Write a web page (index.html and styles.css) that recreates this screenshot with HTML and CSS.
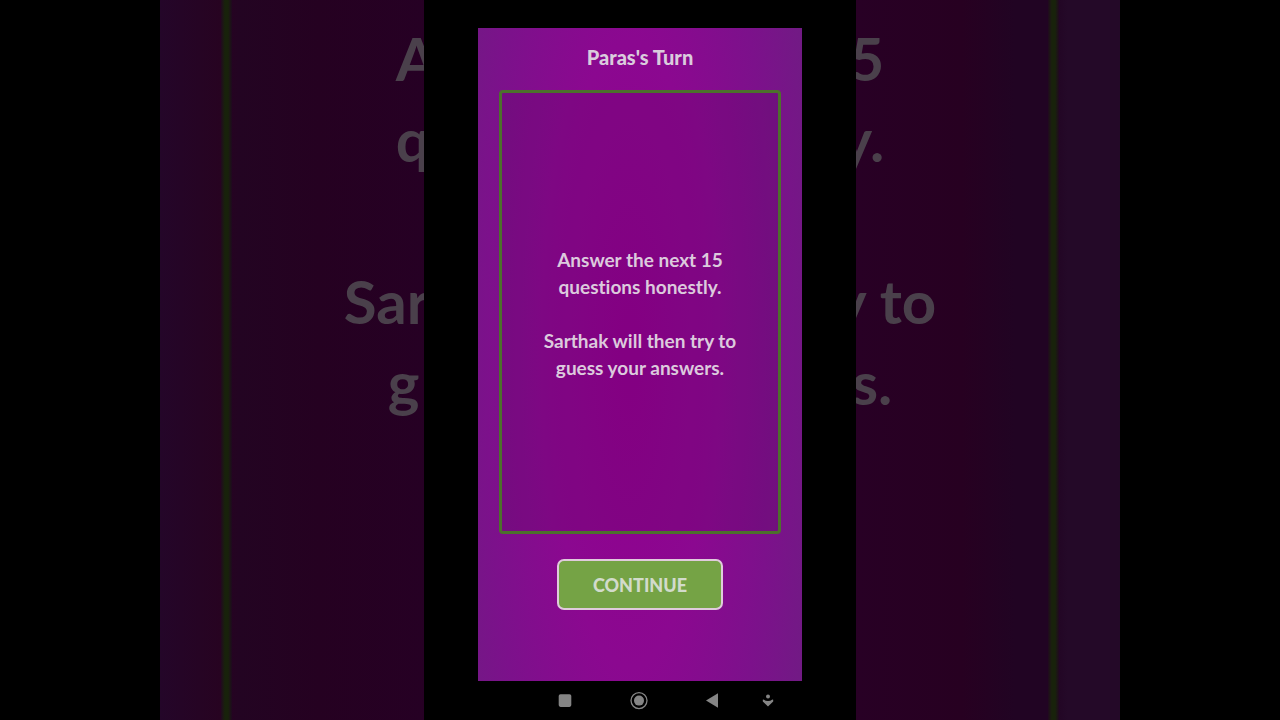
FILE: index.html
```html
<!DOCTYPE html>
<html lang="en">
<head>
<meta charset="utf-8">
<meta name="viewport" content="width=device-width, initial-scale=1">
<title>Paras's Turn</title>
<link rel="stylesheet" href="styles.css">
</head>
<body>
<div class="stage">
  <div class="side side-left" aria-hidden="true">
    <div class="edge"></div>
    <div class="echo">
      <span class="line inset-mid">A</span>
      <span class="line inset-mid">q</span>
      <span class="line"></span>
      <span class="line inset-wide">Sar</span>
      <span class="line inset-near">g</span>
    </div>
  </div>
  <div class="phone">
    <main class="screen">
      <h1 class="title">Paras's Turn</h1>
      <section class="card">
        <p>Answer the next 15<br>questions honestly.</p>
        <p>Sarthak will then try to<br>guess your answers.</p>
      </section>
      <button class="continue" type="button">CONTINUE</button>
    </main>
    <nav class="navbar" aria-label="System navigation">
      <button class="nav" type="button" aria-label="Recent apps">
        <svg width="20" height="20" viewBox="0 0 20 20"><rect x="3.700" y="3.300" width="12.600" height="12.600" rx="1.800" fill="#858585"/></svg>
      </button>
      <button class="nav" type="button" aria-label="Home">
        <svg width="20" height="20" viewBox="0 0 20 20"><circle cx="10" cy="9.600" r="8" fill="none" stroke="#858585" stroke-width="1.300"/><circle cx="10" cy="9.600" r="5" fill="#858585"/></svg>
      </button>
      <button class="nav" type="button" aria-label="Back">
        <svg width="20" height="20" viewBox="0 0 20 20"><path d="M4 9.500 16 2.200v14.600z" fill="#858585"/></svg>
      </button>
      <button class="nav" type="button" aria-label="Hide navigation bar">
        <svg width="20" height="20" viewBox="0 0 20 20"><circle cx="10" cy="5.600" r="2" fill="#858585"/><path d="M4.800 8.800Q5.200 8.200 6 8.800q1.300 1.200 4 1.200t4-1.200q.8-.6 1.200 0v1.600L10 15.400 4.800 10.400z" fill="#858585"/></svg>
      </button>
    </nav>
  </div>
  <div class="side side-right" aria-hidden="true">
    <div class="echo">
      <span class="line inset-mid">5</span>
      <span class="line inset-mid">y.</span>
      <span class="line"></span>
      <span class="line inset-wide">y to</span>
      <span class="line inset-near">s.</span>
    </div>
    <div class="edge"></div>
  </div>
</div>
</body>
</html>
```
FILE: styles.css
```css
* {
  box-sizing: border-box;
}

body {
  margin: 0;
  background: #000;
  font-family: Lato, "Open Sans", sans-serif;
  font-variant-ligatures: none;
}

.stage {
  display: grid;
  grid-template-columns: 11fr 18fr 11fr;
  width: 75%;
  min-height: 100vh;
  margin: 0 auto;
}

.side {
  display: flex;
  overflow: hidden;
  min-width: 0;
}

.side-left {
  background: linear-gradient(90deg, #240629 0, #270321 23%, #230422 30%, #250121 60%, #260024 100%);
}

.side-right {
  background: linear-gradient(90deg, #280025 0, #270021 40%, #210423 60%, #210423 75%, #240928 80%, #240928 100%);
}

.edge {
  flex: none;
  width: 11px;
  background: linear-gradient(90deg, #21091f, #18220b 35%, #18220b 65%, #200820);
}

.side-left .edge {
  margin-left: 23%;
}

.side-right .edge {
  margin-right: 23%;
}

.echo {
  flex: 1;
  min-width: 0;
  padding-top: 18px;
  color: #4a404b;
  font-size: 60px;
  font-weight: 700;
  line-height: 81px;
}

.line {
  display: block;
  height: 81px;
  white-space: nowrap;
}

.side-left .inset-mid { padding-left: 164px; }
.side-left .inset-wide { padding-left: 112px; }
.side-left .inset-near { padding-left: 156px; }

/* The right-hand lines run out from under the phone. */
.side-right .line {
  display: flex;
  justify-content: flex-end;
}

.side-right .inset-mid { padding-right: 164px; }
.side-right .inset-wide { padding-right: 112px; }
.side-right .inset-near { padding-right: 156px; }

.phone {
  display: flex;
  flex-direction: column;
  align-items: center;
  padding-top: 28px;
  background: #000;
}

.screen {
  flex: 1;
  display: flex;
  flex-direction: column;
  align-items: center;
  width: 75%;
  padding: 15px 21px 71px;
  background: radial-gradient(ellipse 62% 120% at 47% 50%, #90008e 0, #8b0890 40%, #7c118b 72%, #6f1c83 100%);
}

.title {
  margin: 0 0 19px;
  color: #dacbdd;
  font-size: 20px;
  font-weight: 900;
  line-height: 28px;
}

.card {
  flex: 1;
  display: flex;
  flex-direction: column;
  justify-content: center;
  gap: 27px;
  width: 100%;
  margin-bottom: 25px;
  padding-top: 2px;
  border: 3px solid #4d702c;
  border-radius: 4px;
  background: rgba(70, 0, 70, 0.16);
  color: #dccadd;
  font-size: 19px;
  font-weight: 700;
  line-height: 27px;
  text-align: center;
}

.card p {
  margin: 0;
}

.continue {
  width: 59%;
  height: 51px;
  padding: 0;
  border: 2px solid #e0cbdc;
  border-radius: 7px;
  background: #75a345;
  color: #d2dbcb;
  font-family: inherit;
  font-size: 18px;
  font-weight: 900;
}

.navbar {
  display: flex;
  align-items: center;
  justify-content: space-between;
  width: 75%;
  height: 39px;
  padding: 0 24px 0 77px;
}

.nav {
  display: flex;
  padding: 0;
  border: 0;
  background: none;
}

.nav:nth-child(3) {
  margin-right: -18px;
}
```
